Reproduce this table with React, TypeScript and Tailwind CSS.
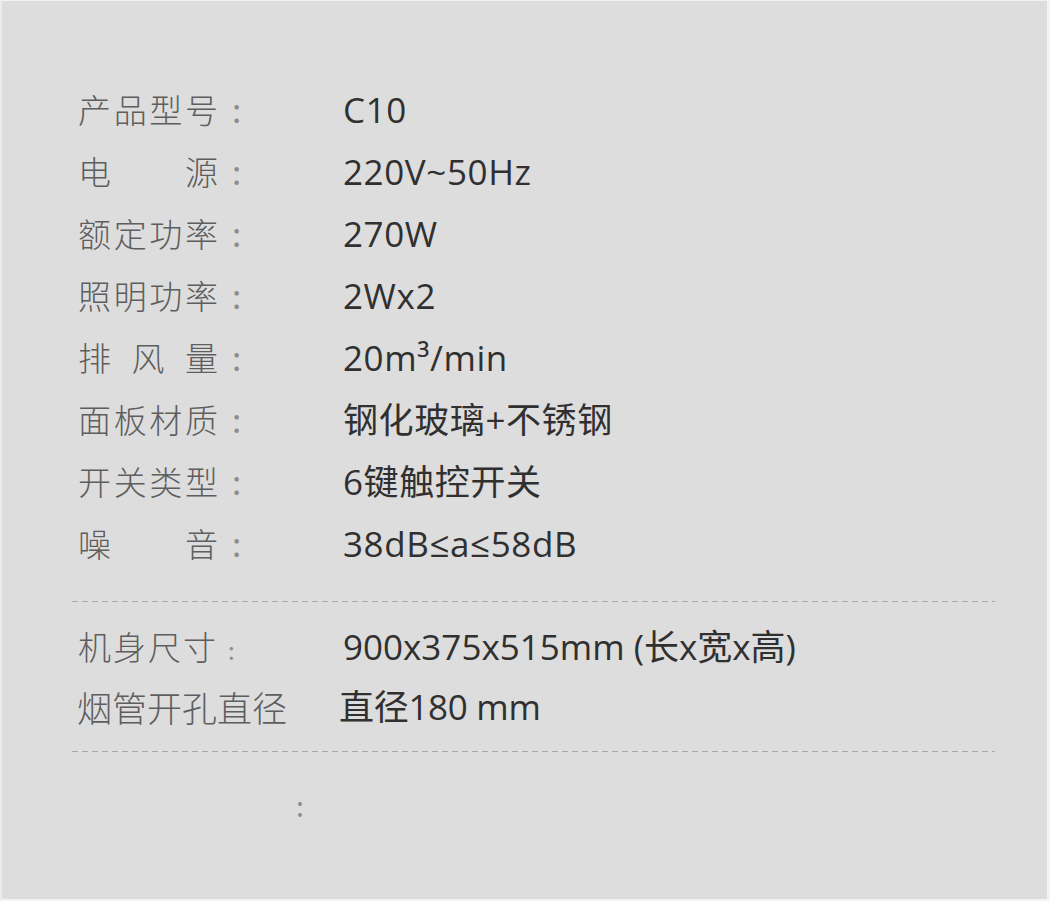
const labelFont = { fontFamily: '"Noto Sans CJK SC", "Noto Sans", sans-serif' }
const valueFont = { fontFamily: '"Open Sans", "Noto Sans CJK SC", sans-serif' }

const specs = [
  { label: '产品型号', value: 'C10' },
  { label: '电源', value: '220V~50Hz' },
  { label: '额定功率', value: '270W' },
  { label: '照明功率', value: '2Wx2' },
  { label: '排风量', value: '20m³/min' },
  { label: '面板材质', value: '钢化玻璃+不锈钢' },
  { label: '开关类型', value: '6键触控开关' },
  { label: '噪音', value: '38dB≤a≤58dB' },
]

const Dashed = () => (
  <div className="ml-[70px] h-px w-[923px] bg-[linear-gradient(to_right,#a9a9a9_60%,transparent_60%)] bg-[length:10px_1px]" />
)

const App = () => {
  return (
    <div
      className="h-[901px] w-[1050px] overflow-hidden border-t border-r-[3px] border-b-2 border-l-2 border-t-[#f2f2f2] border-r-[#f4f4f4] border-b-[#f4f4f4] border-l-[#ececec] bg-[#dddddd]"
      style={labelFont}
    >
      <div className="flex flex-col pt-[78px]">
        {specs.map((s) => {
          return (
            <div key={s.label} className="flex h-[62px] items-center">
              <span className="ml-[76px] w-[140px] text-[33px] font-light text-[#5e5e5e] [text-align-last:justify]">{s.label}</span>
              <span className="ml-[14px] w-[111px] text-[33px] text-[#8c8c8c]">:</span>
              <span className="text-[35px] tracking-[0.6px] text-[#303030]" style={valueFont}>{s.value}</span>
            </div>
          )
        })}
        <div className="mt-[26px]">
          <Dashed />
        </div>
        <div className="mt-[14px] flex h-[62px] items-center">
          <span className="ml-[76px] w-[138px] text-[33px] font-light text-[#5e5e5e] [text-align-last:justify]">机身尺寸</span>
          <span className="ml-[12px] w-[115px] pt-[6px] text-[24px] text-[#8c8c8c]">:</span>
          <span className="text-[35px] text-[#303030]" style={valueFont}>900x375x515mm (长x宽x高)</span>
        </div>
        <div className="flex h-[58px] items-center">
          <span className="ml-[75px] w-[262px] text-[35px] font-light text-[#5e5e5e]">烟管开孔直径</span>
          <span className="text-[35px] tracking-[-0.3px] text-[#303030]" style={valueFont}>直径180 mm</span>
        </div>
        <div className="mt-[15px]">
          <Dashed />
        </div>
        <div className="ml-[294px] mt-[32px] text-[28px] text-[#8c8c8c]">:</div>
      </div>
    </div>
  )
}

export default App
